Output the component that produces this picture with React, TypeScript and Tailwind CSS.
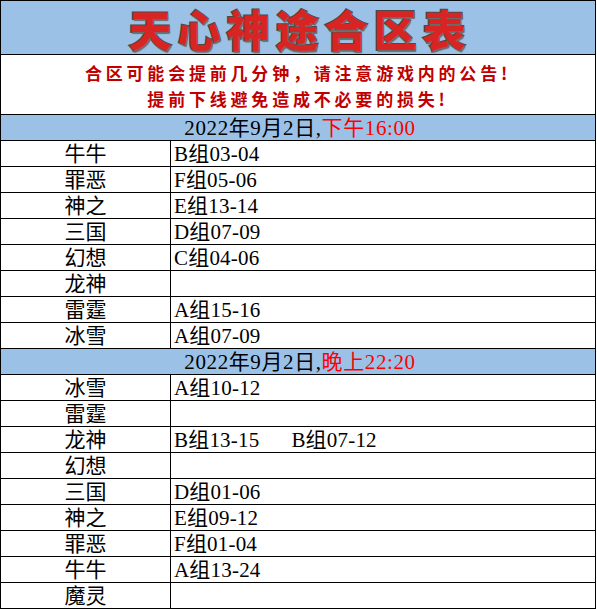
import React from "react";

type Row = { name: string; groups: string[] };

const firstRound: Row[] = [
  { name: "牛牛", groups: ["B组03-04"] },
  { name: "罪恶", groups: ["F组05-06"] },
  { name: "神之", groups: ["E组13-14"] },
  { name: "三国", groups: ["D组07-09"] },
  { name: "幻想", groups: ["C组04-06"] },
  { name: "龙神", groups: [] },
  { name: "雷霆", groups: ["A组15-16"] },
  { name: "冰雪", groups: ["A组07-09"] },
];

const secondRound: Row[] = [
  { name: "冰雪", groups: ["A组10-12"] },
  { name: "雷霆", groups: [] },
  { name: "龙神", groups: ["B组13-15", "B组07-12"] },
  { name: "幻想", groups: [] },
  { name: "三国", groups: ["D组01-06"] },
  { name: "神之", groups: ["E组09-12"] },
  { name: "罪恶", groups: ["F组01-04"] },
  { name: "牛牛", groups: ["A组13-24"] },
  { name: "魔灵", groups: [] },
];

const cellFont = {
  fontFamily: '"Liberation Serif", "Noto Sans CJK SC", serif',
};

const DateHeader: React.FC<{ date: string; time: string }> = ({ date, time }) => (
  <div className="flex h-[26px] items-end justify-center border-b border-black bg-[#9bc2e6] pl-[4px] text-[21px] leading-[24px] tracking-[0.6px] text-black">
    <span>{date}</span>
    <span className="text-[#ff0000]">{time}</span>
  </div>
);

const ServerRow: React.FC<{ row: Row }> = ({ row }) => (
  <div className="grid h-[26px] grid-cols-[170px_1fr] border-b border-black text-[21px] leading-[24px] text-black">
    <div className="flex items-end justify-center border-r border-black">{row.name}</div>
    <div className="flex items-end gap-[32px] pl-[3px] tracking-[0.2px]">
      {row.groups.map((g) => (
        <span key={g}>{g}</span>
      ))}
    </div>
  </div>
);

export default function App() {
  return (
    <div className="min-h-[609px] bg-white">
      <div className="w-[596px] border-x border-t border-black" style={cellFont}>
        {/* title */}
        <div className="flex h-[54px] items-center justify-center border-b border-black bg-[#9bc2e6]">
          <span
            className="pl-[4px] text-[43px] font-black leading-[52px] tracking-[6px] text-[#d92424] [-webkit-text-stroke:2px_#4a4a4a] [paint-order:stroke_fill] [text-shadow:1px_2px_1px_#6b6b6b]"
            style={{ fontFamily: '"Noto Sans CJK SC", sans-serif' }}
          >
            天心神途合区表
          </span>
        </div>

        {/* notice */}
        <div
          className="flex h-[60px] flex-col items-center justify-center border-b border-black pt-[2px] text-[17px] font-bold leading-[26px] tracking-[3.8px] text-[#c00000]"
          style={{ fontFamily: '"Noto Sans CJK SC", sans-serif' }}
        >
          <div>合区可能会提前几分钟，请注意游戏内的公告!</div>
          <div>提前下线避免造成不必要的损失!</div>
        </div>

        <DateHeader date="2022年9月2日," time="下午16:00" />
        {firstRound.map((r, i) => (
          <ServerRow key={"a" + i} row={r} />
        ))}

        <DateHeader date="2022年9月2日," time="晚上22:20" />
        {secondRound.map((r, i) => (
          <ServerRow key={"b" + i} row={r} />
        ))}
      </div>
    </div>
  );
}
